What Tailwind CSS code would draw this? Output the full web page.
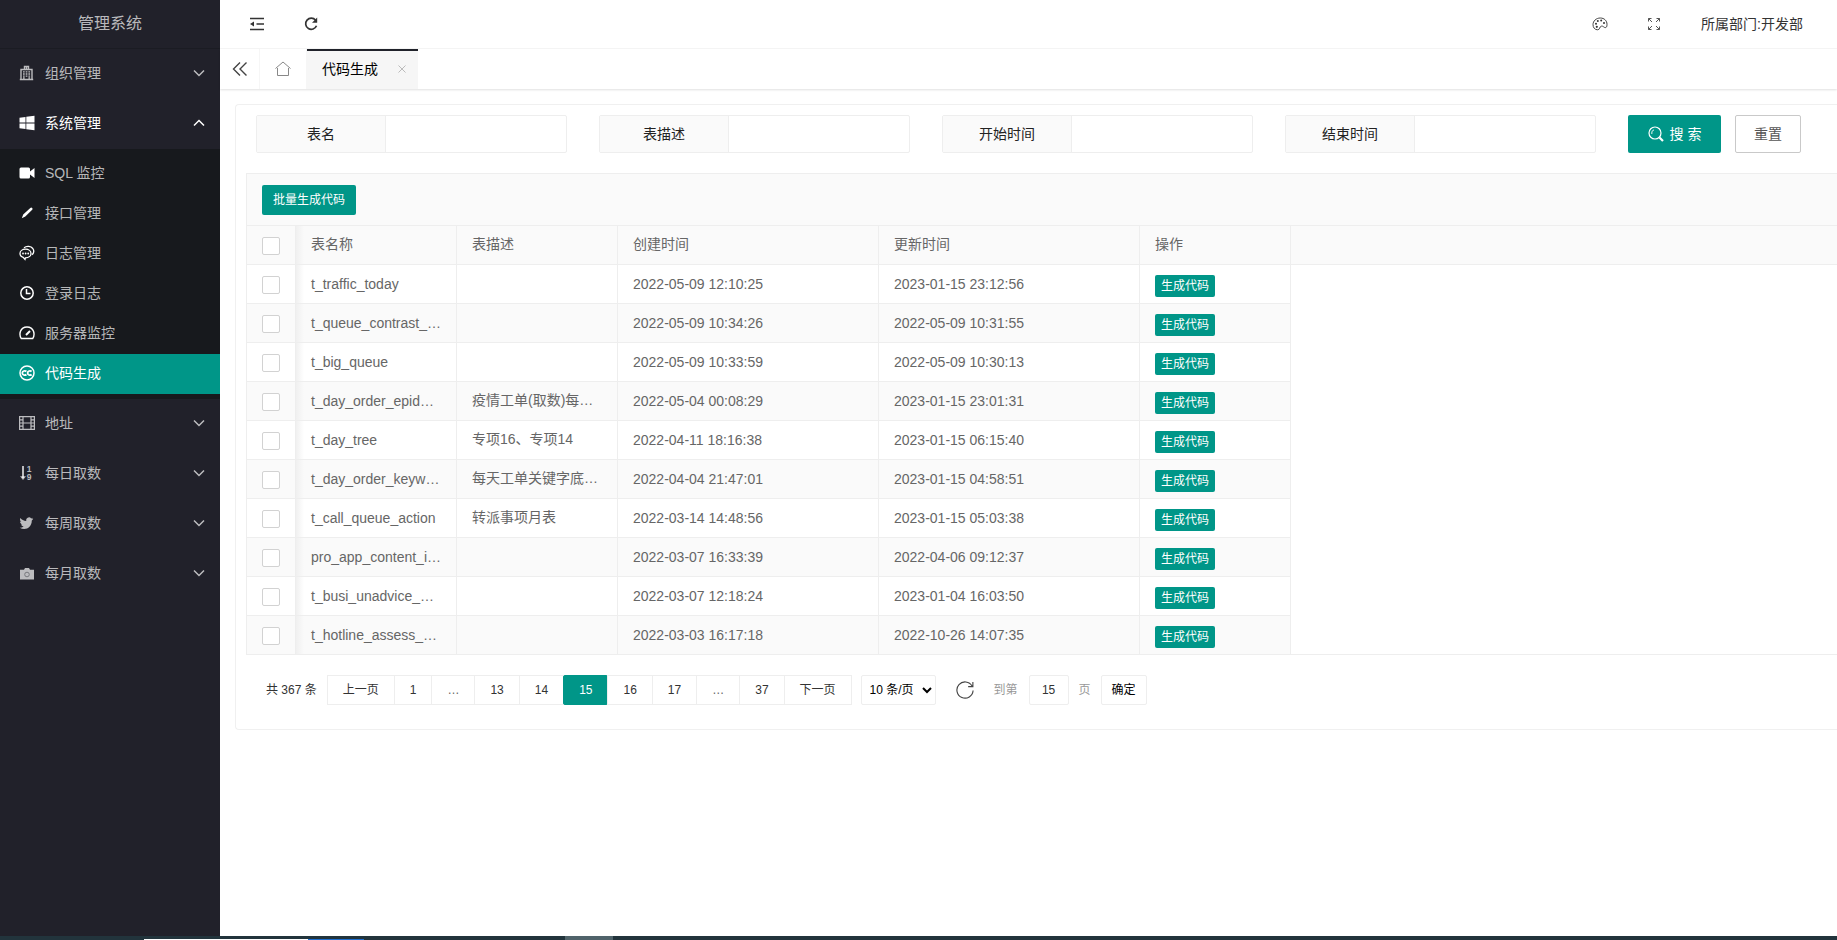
<!DOCTYPE html>
<html lang="zh-CN">
<head>
<meta charset="utf-8">
<title>管理系统</title>
<script src="https://cdn.jsdelivr.net/npm/@tailwindcss/browser@4"></script>
</head>
<body class="flex h-screen flex-col overflow-hidden bg-white font-['Liberation_Sans','Noto_Sans_CJK_SC',sans-serif] text-sm text-[#333]">

<div class="flex min-h-0 flex-1">
  <aside class="flex w-[220px] shrink-0 flex-col bg-[#21212a] text-white/70">
    <h1 class="h-[49px] border-b border-[#1b1c23] text-center text-base leading-10 pt-1 font-normal">管理系统</h1>
    <nav id="menu"></nav>
  </aside>

  <div class="flex min-w-0 flex-1 flex-col">
    <header class="flex h-[49px] shrink-0 items-center border-b border-[#f6f6f6]">
      <button aria-label="侧边伸缩" class="ml-7 flex size-[18px] items-center justify-center">
        <svg class="size-4" viewBox="0 0 16 16" fill="none" stroke="#333" stroke-width="1.6"><path d="M1 2.5h14M7.500 8H15M1 13.500h14"/><path d="M5 5.400v5.200L1 8z" fill="#333" stroke="none"/></svg>
      </button>
      <button aria-label="刷新" class="ml-9 flex size-[18px] items-center justify-center">
        <svg class="size-4" viewBox="0 0 16 16" fill="none" stroke="#333" stroke-width="1.7"><path d="M12.6 4.2A5.600 5.600 0 1 0 13.500 9.800"/><path d="M14.200 1.600v5.200H9z" fill="#333" stroke="none"/></svg>
      </button>
      <button aria-label="主题" class="ml-auto flex size-[18px] items-center justify-center">
        <svg class="size-4" viewBox="0 0 16 16" fill="none" stroke="#444" stroke-width="1"><path d="M5.300 13.800C2.700 13.600 1 11.500 1 8.600 1 5 4.200 2 8.300 2 12.300 2 15 4.800 15 8.300c0 2.400-.6 3.300-1.600 3.300-1.600 0-2.200-1.800-3.800-1.500C7 10.500 8.400 14 5.300 13.800z"/><g fill="#333" stroke="none"><circle cx="4" cy="7.800" r="1"/><circle cx="5.800" cy="5" r="1"/><circle cx="9.200" cy="4.500" r="1"/><circle cx="12" cy="7" r="1"/><circle cx="4.800" cy="10.800" r="1.100"/></g></svg>
      </button>
      <button aria-label="全屏" class="ml-9 flex size-[18px] items-center justify-center">
        <svg class="size-3" viewBox="0 0 12 12" fill="none" stroke="#555" stroke-width="1"><path d="M.5 3.500v-3h3M8.500.5h3v3M11.500 8.500v3h-3M3.500 11.500h-3v-3M.5.5l3.500 3.500M11.500.5L8 4M11.500 11.500L8 8M.5 11.500L4 8"/></svg>
      </button>
      <a href="#" class="ml-[38px] mr-[34px] whitespace-nowrap">所属部门:开发部</a>
    </header>

    <div class="flex h-10 shrink-0 items-stretch shadow-[0_1px_2px_rgba(0,0,0,0.12)]">
      <button aria-label="向左" class="flex w-10 items-center justify-center border-r border-[#f6f6f6]">
        <svg class="size-4" viewBox="0 0 16 16" fill="none" stroke="#444" stroke-width="1.400"><path d="M8 1.500L1.500 8 8 14.500M14.500 1.500L8 8l6.500 6.500"/></svg>
      </button>
      <button aria-label="主页" class="flex w-[47px] items-center justify-center border-r border-[#f6f6f6]">
        <svg class="size-4" viewBox="0 0 16 16" fill="none" stroke="#888" stroke-width="1"><path d="M.5 7.500L8 1l7.500 6.500M2.500 7v7.500h11V7"/></svg>
      </button>
      <div class="flex items-center border-t-2 border-[#20222a] bg-[#f6f6f6] pb-0.5 pl-[15px] pr-[11px] text-black">
        <a href="#">代码生成</a>
        <button aria-label="关闭" class="ml-5 mr-px"><svg class="size-2" viewBox="0 0 8 8" fill="none" stroke="#bbb" stroke-width="1"><path d="M.5.5l7 7M7.500.5l-7 7"/></svg></button>
      </div>
    </div>

    <main class="mt-[15px] ml-[15px] rounded-l border border-r-0 border-[#f0f0f0] pb-6">
      <form class="flex gap-8 pt-[10px] pl-5 pr-9" onsubmit="return false">
        <div class="flex h-[38px] min-w-0 flex-1 rounded-xs border border-[#eee]">
          <label for="f1" class="w-[129px] shrink-0 border-r border-[#eee] bg-[#fafafa] text-center leading-9 text-[#222]">表名</label>
          <input id="f1" class="min-w-0 flex-1 px-2 outline-none">
        </div>
        <div class="flex h-[38px] min-w-0 flex-1 rounded-xs border border-[#eee]">
          <label for="f2" class="w-[129px] shrink-0 border-r border-[#eee] bg-[#fafafa] text-center leading-9 text-[#222]">表描述</label>
          <input id="f2" class="min-w-0 flex-1 px-2 outline-none">
        </div>
        <div class="flex h-[38px] min-w-0 flex-1 rounded-xs border border-[#eee]">
          <label for="f3" class="w-[129px] shrink-0 border-r border-[#eee] bg-[#fafafa] text-center leading-9 text-[#222]">开始时间</label>
          <input id="f3" class="min-w-0 flex-1 px-2 outline-none">
        </div>
        <div class="flex h-[38px] min-w-0 flex-1 rounded-xs border border-[#eee]">
          <label for="f4" class="w-[129px] shrink-0 border-r border-[#eee] bg-[#fafafa] text-center leading-9 text-[#222]">结束时间</label>
          <input id="f4" class="min-w-0 flex-1 px-2 outline-none">
        </div>
        <div class="flex gap-[14px]">
          <button class="flex w-[93px] items-center justify-center gap-1.5 rounded-xs bg-[#009688] text-white">
            <svg class="size-4" viewBox="0 0 16 16" fill="none" stroke="#fff"><circle cx="7" cy="7" r="6" stroke-width="1.200"/><path d="M3.800 8A3.500 3.500 0 0 1 6 3.800" stroke-width=".9"/><path d="M11.500 11.500l3.500 3.500" stroke-width="2.200"/></svg>
            <span>搜 索</span>
          </button>
          <button type="reset" class="w-[66px] rounded-xs border border-[#c9c9c9] text-[#555]">重置</button>
        </div>
      </form>

      <section class="mt-5 ml-[10px] border-t border-l border-[#eee]">
        <div class="flex h-[52px] items-center border-b border-[#eee] bg-[#fafafa] pl-[15px]">
          <button class="h-[30px] rounded-xs bg-[#009688] px-[11px] text-xs text-white">批量生成代码</button>
        </div>
        <table class="w-full table-fixed border-separate border-spacing-0 text-[#666]">
          <colgroup><col class="w-[49px]"><col class="w-[161px]"><col class="w-[161px]"><col class="w-[261px]"><col class="w-[261px]"><col class="w-[151px]"><col></colgroup>
          <thead>
            <tr class="h-[39px] bg-[#fafafa] text-left [&>th]:border-b [&>th]:border-[#eee] [&>th]:font-normal">
              <th class="border-r px-0 pt-0.5 pb-0"><input type="checkbox" aria-label="全选" class="ml-[15px] block size-[18px] appearance-none rounded-xs border border-[#d2d2d2] bg-white"></th>
              <th class="border-r bg-linear-to-r from-[#f0f0f0] to-transparent to-5% px-[15px] pt-0 pb-0.5">表名称</th>
              <th class="border-r px-[15px] pt-0 pb-0.5">表描述</th>
              <th class="border-r px-[15px] pt-0 pb-0.5">创建时间</th>
              <th class="border-r px-[15px] pt-0 pb-0.5">更新时间</th>
              <th class="border-r px-[15px] pt-0 pb-0.5">操作</th>
              <th class="p-0"></th>
            </tr>
          </thead>
          <tbody id="rows"></tbody>
        </table>
      </section>

      <div class="mt-5 ml-[30px] flex h-[30px] items-center text-xs">
        <span class="mr-[11px]">共 367 条</span>
        <div class="flex [&>*]:-ml-px [&>*]:h-[30px] [&>*]:border [&>*]:border-[#eee] [&>*]:px-[15px] [&>*]:leading-7">
          <a href="#">上一页</a><a href="#">1</a><span class="text-[#666]">…</span><a href="#">13</a><a href="#">14</a>
          <a href="#" aria-current="page" class="rounded-xs border-[#009688]! bg-[#009688] text-white">15</a>
          <a href="#">16</a><a href="#">17</a><span class="text-[#666]">…</span><a href="#">37</a><a href="#">下一页</a>
        </div>
        <select aria-label="每页条数" class="ml-[9px] h-[30px] w-[75px] rounded-xs border border-[#eee] bg-white pl-1 text-black"><option>10 条/页</option></select>
        <button aria-label="刷新表格" class="ml-5"><svg class="size-[18px]" viewBox="0 0 16 16" fill="none" stroke="#444" stroke-width="1"><path d="M14.300 4.500A7.200 7.200 0 1 0 15.200 8.500M15 .8v4.200h-4.200"/></svg></button>
        <label for="page" class="ml-5 text-[#999]">到第</label>
        <input id="page" value="15" class="ml-[11px] h-[30px] w-10 rounded-xs border border-[#eee] text-center">
        <span class="ml-[10px] text-[#999]">页</span>
        <button class="ml-[10px] h-[30px] w-[46px] rounded-xs border border-[#eee] text-black">确定</button>
      </div>
    </main>
  </div>
</div>

<footer class="flex h-1 shrink-0 bg-[#22343c]">
  <div class="ml-36 mt-[3px] w-[164px] bg-white"></div>
  <div class="mt-[3px] w-14 bg-[#1f6fd0]"></div>
  <div class="ml-[201px] w-12 bg-[#50636a]"></div>
</footer>

<script>
const icons = {
  building: '<path d="M2 4.500h11V14.500H2zM5.500 4.500V1.500h4v3M.8 14.500h13.400M7.500 1.500v2.500" fill="none" stroke="currentColor" stroke-width="1.400"/><path d="M4 6.800h1.700M6.700 6.800h1.700M9.400 6.800h1.700M4 9h1.700M6.700 9h1.700M9.400 9h1.700M4 11.200h1.700M6.700 11.200h1.700M9.400 11.200h1.700M4 13h1.700M9.400 13h1.700" stroke="currentColor" stroke-width="1.300"/>',
  windows: '<path d="M.5 2.800L6.500 2v5.600h-6zM7.300 1.800L15.500.8v6.800H7.300zM.5 8.400h6V14l-6-.8zM7.300 8.400h8.200v6.800l-8.200-1z" fill="currentColor"/>',
  video: '<path d="M2 2.500h7.500A1.500 1.500 0 0 1 11 4v2.400L15.500 3v10L11 9.600V12a1.500 1.500 0 0 1-1.500 1.500H2A1.500 1.500 0 0 1 .5 12V4A1.500 1.500 0 0 1 2 2.500z" fill="currentColor"/>',
  pen: '<path d="M11.300 3a1.300 1.300 0 0 1 1.900 1.800L6.300 11.400 2.800 13.200l1.400-3.600z" fill="currentColor"/>',
  chat: '<path d="M6.500 4.200C9.600 4.200 12 6 12 8.500s-2.400 4.300-5.500 4.300l-.5 1.600-1.800-2C2.200 11.700 1 10.200 1 8.500c0-2.500 2.400-4.300 5.500-4.300zM5 2.800C7.800.6 12 1.200 13.800 3.500c1.400 2 1 4.500-.6 6.200" fill="none" stroke="currentColor" stroke-width="1.300"/><g fill="currentColor"><circle cx="4" cy="8.500" r=".9"/><circle cx="6.600" cy="8.500" r=".9"/><circle cx="9.200" cy="8.500" r=".9"/></g>',
  clock: '<path d="M8 1.800A6.200 6.200 0 1 1 8 14.200 6.200 6.200 0 1 1 8 1.800zM7.500 4v4.500h4" fill="none" stroke="currentColor" stroke-width="1.500"/>',
  gauge: '<path d="M2.200 13.500C-.2 9.500.8 2 8 2s8.200 7.500 5.800 11.500z" fill="none" stroke="currentColor" stroke-width="1.400"/><path d="M7 10l4-4" stroke="currentColor" stroke-width="1.900"/>',
  cc: '<circle cx="8" cy="8" r="7" fill="none" stroke="currentColor" stroke-width="1.500"/><path d="M7.400 6.500C6 5.200 3.300 6 3.300 8s2.700 2.800 4.100 1.500M12.600 6.500C11.200 5.200 8.600 6 8.600 8s2.600 2.800 4 1.500" fill="none" stroke="currentColor" stroke-width="1.800"/>',
  film: '<path d="M.6 1.600h14.800v12.800H.6zM4 1.600v12.800M12 1.600v12.800M4 8h8M.6 4.800H4M.6 8H4M.6 11.200H4M12 4.800h3.400M12 8h3.400M12 11.200h3.400" fill="none" stroke="currentColor" stroke-width="1.200"/>',
  sort: '<path d="M4 1v12" stroke="currentColor" stroke-width="2"/><path d="M1 11.200h6L4 15z" fill="currentColor"/><text x="7.800" y="7" font-size="8.500" font-weight="bold" fill="currentColor">1</text><text x="7.800" y="14.800" font-size="8.500" font-weight="bold" fill="currentColor">9</text>',
  bird: '<path d="M14.200 3.800l-1.400.4c.5-.3.900-.8 1.100-1.400l-1.700.6a2.900 2.900 0 0 0-5 2.600C4.700 5.900 2.700 4.800 1.400 3.100c-.8 1.400-.3 3 .9 3.800L1 6.600c0 1.400 1 2.500 2.300 2.800l-1.300.1c.4 1.100 1.400 1.900 2.700 2-1.300.9-2.700 1.300-4 1.200 5.500 3.200 12.100.2 12.100-7.200.6-.4 1.100-1 1.400-1.700z" fill="currentColor"/>',
  camera: '<path d="M1 4.800h4l1-1.800h4l1 1.800h4V14.500H1z" fill="currentColor"/><circle cx="8" cy="9.500" r="2.300" fill="none" stroke="#77787d" stroke-width="1"/>'
};
const icon = name => `<svg class="mr-[10px] size-4 shrink-0" viewBox="0 0 16 16">${icons[name]}</svg>`;
const down = '<svg class="ml-auto mr-[15px] h-2 w-3" viewBox="0 0 12 8" fill="none" stroke="currentColor" stroke-width="1.500"><path d="M1 1.500l5 5 5-5"/></svg>';
const up = '<svg class="ml-auto mr-[15px] h-2 w-3" viewBox="0 0 12 8" fill="none" stroke="currentColor" stroke-width="1.500"><path d="M1 6.500l5-5 5 5"/></svg>';
const group = (i, t) => `<a href="#" class="flex h-[50px] items-center pb-0.5 pl-[19px]">${icon(i)}${t}${down}</a>`;
const child = (i, t) => `<a href="#" class="flex h-10 items-center pb-0.5 pl-[19px]">${icon(i)}${t}</a>`;
document.getElementById('menu').innerHTML =
  group('building', '组织管理') +
  `<a href="#" class="flex h-[50px] items-center pb-0.5 pl-[19px] text-white">${icon('windows')}系统管理${up}</a>` +
  '<div class="bg-[#17191d] py-[5px] [&_svg]:text-white">' +
  child('video', 'SQL 监控') + child('pen', '接口管理') + child('chat', '日志管理') + child('clock', '登录日志') + child('gauge', '服务器监控') +
  `<a href="#" class="flex h-10 items-center bg-[#009688] pb-0.5 pl-[19px] text-white">${icon('cc')}代码生成</a></div>` +
  group('film', '地址') + group('sort', '每日取数') + group('bird', '每周取数') + group('camera', '每月取数');

const data = [
  ['t_traffic_today', '', '2022-05-09 12:10:25', '2023-01-15 23:12:56'],
  ['t_queue_contrast_…', '', '2022-05-09 10:34:26', '2022-05-09 10:31:55'],
  ['t_big_queue', '', '2022-05-09 10:33:59', '2022-05-09 10:30:13'],
  ['t_day_order_epid…', '疫情工单(取数)每…', '2022-05-04 00:08:29', '2023-01-15 23:01:31'],
  ['t_day_tree', '专项16、专项14', '2022-04-11 18:16:38', '2023-01-15 06:15:40'],
  ['t_day_order_keyw…', '每天工单关键字底…', '2022-04-04 21:47:01', '2023-01-15 04:58:51'],
  ['t_call_queue_action', '转派事项月表', '2022-03-14 14:48:56', '2023-01-15 05:03:38'],
  ['pro_app_content_i…', '', '2022-03-07 16:33:39', '2022-04-06 09:12:37'],
  ['t_busi_unadvice_…', '', '2022-03-07 12:18:24', '2023-01-04 16:03:50'],
  ['t_hotline_assess_…', '', '2022-03-03 16:17:18', '2022-10-26 14:07:35']
];
document.getElementById('rows').innerHTML = data.map(([name, desc, made, changed]) => `
  <tr class="group h-[39px] whitespace-nowrap [&>td]:border-[#eee] even:[&>td:not(:last-child)]:bg-[#fafafa]">
    <td class="border-r border-b px-0 pt-0.5 pb-0"><input type="checkbox" aria-label="选择 ${name}" class="ml-[15px] block size-[18px] appearance-none rounded-xs border border-[#d2d2d2] bg-white"></td>
    <td class="border-r border-b bg-linear-to-r from-[#f0f0f0] to-transparent to-5% px-[15px] py-0">${name}</td>
    <td class="border-r border-b px-[15px] pt-0 pb-0.5">${desc}</td>
    <td class="border-r border-b px-[15px] py-0">${made}</td>
    <td class="border-r border-b px-[15px] py-0">${changed}</td>
    <td class="border-r border-b px-[15px] pt-1 pb-0"><button class="block h-[22px] rounded-xs bg-[#009688] px-1.5 text-xs text-white">生成代码</button></td>
    <td class="p-0 group-last:border-b"></td>
  </tr>`).join('');
</script>
</body>
</html>
